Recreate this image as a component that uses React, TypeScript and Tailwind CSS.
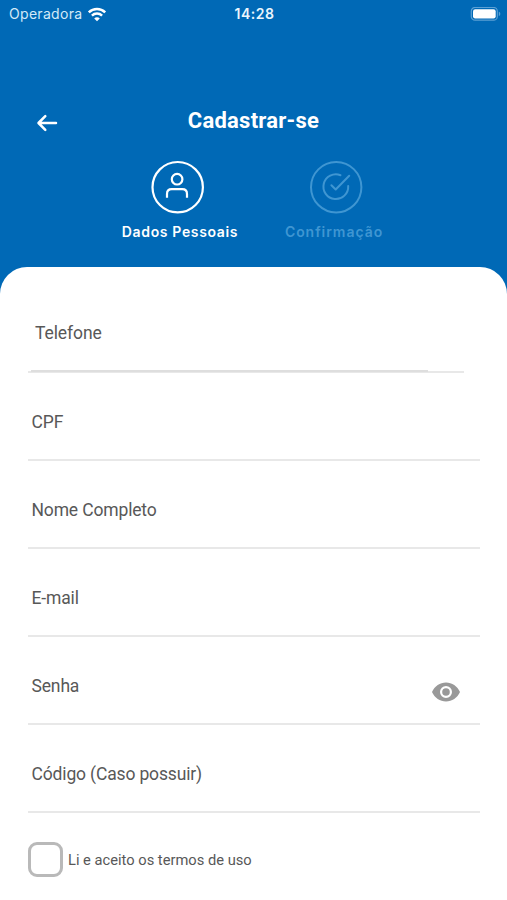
import React from "react";

const fields = ["CPF", "Nome Completo", "E-mail", "Senha", "Código (Caso possuir)"];

function Wifi() {
  return (
    <svg width="20" height="15" viewBox="0 0 20 15" fill="none" stroke="#fff" strokeWidth="2.5">
      <path d="M1.8 5.3C6.4.9 13.6.9 18.2 5.3" />
      <path d="M4.9 8.6c2.9-2.7 7.3-2.7 10.2 0" />
      <path d="M10 14.2 7.2 11.4c1.6-1.4 4-1.4 5.6 0z" fill="#fff" stroke="none" />
    </svg>
  );
}

function Battery() {
  return (
    <svg width="31" height="15" viewBox="0 0 31 15">
      <rect x="1.3" y=".4" width="26" height="12.8" rx="3.8" fill="none" stroke="#5ba0d4" strokeWidth="1.2" />
      <rect x="3" y="2.2" width="22.7" height="9.2" rx="2.2" fill="#fff" />
      <path d="M28.8 4.7c2 .7 2 3.6 0 4.3z" fill="#5ba0d4" />
    </svg>
  );
}

function PersonStep() {
  return (
    <svg width="54" height="54" viewBox="0 0 54 54" fill="none" stroke="#fff" strokeWidth="2.2" strokeLinecap="round">
      <circle cx="26.7" cy="27.2" r="25.2" />
      <circle cx="26.1" cy="19.2" r="5.3" />
      <path d="M16 37.8v-3.9c0-2.8 1.9-4.7 4.7-4.7h10.6c2.8 0 4.7 1.9 4.7 4.7v3.9" strokeLinecap="butt" />
    </svg>
  );
}

function CheckStep() {
  return (
    <svg width="54" height="54" viewBox="0 0 54 54" fill="none" stroke="#3f96d2" strokeWidth="2" strokeLinecap="round" strokeLinejoin="round">
      <circle cx="27.2" cy="27.2" r="25.2" />
      <path d="M31.5 15.2A12.4 12.4 0 1 0 39.2 26" />
      <path d="m22.4 25.2 4.3 4.3L40.2 15.8" />
    </svg>
  );
}

export default function App() {
  return (
    <div className="h-[900px] w-[507px] overflow-hidden bg-[#0069b6] font-['Roboto','Liberation_Sans',sans-serif]">
      <header className="h-[267px] text-white">
        <div className="grid h-7 grid-cols-3 items-center pl-[9px] pr-[6px]">
          <div className="flex items-center gap-[5px] text-[#d3e9f8]">
            <span className="font-['Inter',sans-serif] text-sm leading-5 tracking-[0.3px]">Operadora</span>
            <Wifi />
          </div>
          <span className="pr-px text-center font-['Inter',sans-serif] text-sm font-semibold leading-5 tracking-[0.5px] text-[#eaf5fd]">14:28</span>
          <div className="flex justify-end"><Battery /></div>
        </div>
        <div className="mt-[76px] grid h-8 grid-cols-[80px_1fr_80px] items-start">
          <button aria-label="Voltar" className="mt-[9px] pl-9">
            <svg width="22" height="20" viewBox="0 0 22 20" fill="none" stroke="#fff" strokeWidth="2.5" strokeLinecap="round" strokeLinejoin="round">
              <path d="M20 10H2.8M9.3 3.2 2.5 10l6.8 6.8" />
            </svg>
          </button>
          <h1 className="pt-px text-center text-[22px] font-bold leading-8 tracking-[0.25px]">Cadastrar-se</h1>
        </div>
        <div className="mt-6 flex pl-[99px] font-['Inter',sans-serif] text-sm font-semibold leading-5">
          <div className="flex w-[158px] flex-col items-center gap-2">
            <PersonStep />
            <span className="whitespace-nowrap pl-1 tracking-[0.65px]">Dados Pessoais</span>
          </div>
          <div className="flex w-[158px] flex-col items-center gap-2 text-[#3f96d2]">
            <CheckStep />
            <span className="pr-1 tracking-[0.95px]">Confirmação</span>
          </div>
        </div>
      </header>
      <main className="h-[633px] rounded-t-[27px] bg-white px-7 pt-[18px] text-[#585858]">
        <div className="flex h-[88px] w-[436px] flex-col border-b-2 border-[#e8e8e8] pl-[3px]">
          <label className="h-[85px] pl-1 pt-9 text-[17.5px] leading-6 tracking-[-0.1px]">Telefone</label>
          <div className="-mb-px h-[2px] w-[397px] shrink-0 bg-[#dedede]" />
        </div>
        {fields.map((name) => (
          <div key={name} className="flex h-[88px] w-[452px] justify-between border-b-2 border-[#e8e8e8] pl-[3.5px] pt-9">
            <label className="pt-px text-[17.5px] leading-6 tracking-[-0.15px]">{name}</label>
            {name === "Senha" && (
              <svg className="mr-5 mt-[9px]" width="28" height="20" viewBox="0 0 28 20">
                <path fillRule="evenodd" fill="#999" d="M14 .5C8 .5 2.6 4.2 0 10c2.6 5.8 8 9.5 14 9.5S25.4 15.8 28 10C25.4 4.2 20 .5 14 .5Zm0 3.5a6 6 0 1 1 0 12 6 6 0 0 1 0-12Zm0 2.2a3.8 3.8 0 1 0 0 7.6 3.8 3.8 0 0 0 0-7.6Z" />
              </svg>
            )}
          </div>
        ))}
        <label className="flex items-center gap-[5px] pt-[29px]">
          <input type="checkbox" className="h-[35px] w-[35px] appearance-none rounded-[9px] border-[3px] border-[#b9b9b9] bg-white" />
          <span className="pt-px text-[14.7px] leading-5">Li e aceito os termos de uso</span>
        </label>
      </main>
    </div>
  );
}
